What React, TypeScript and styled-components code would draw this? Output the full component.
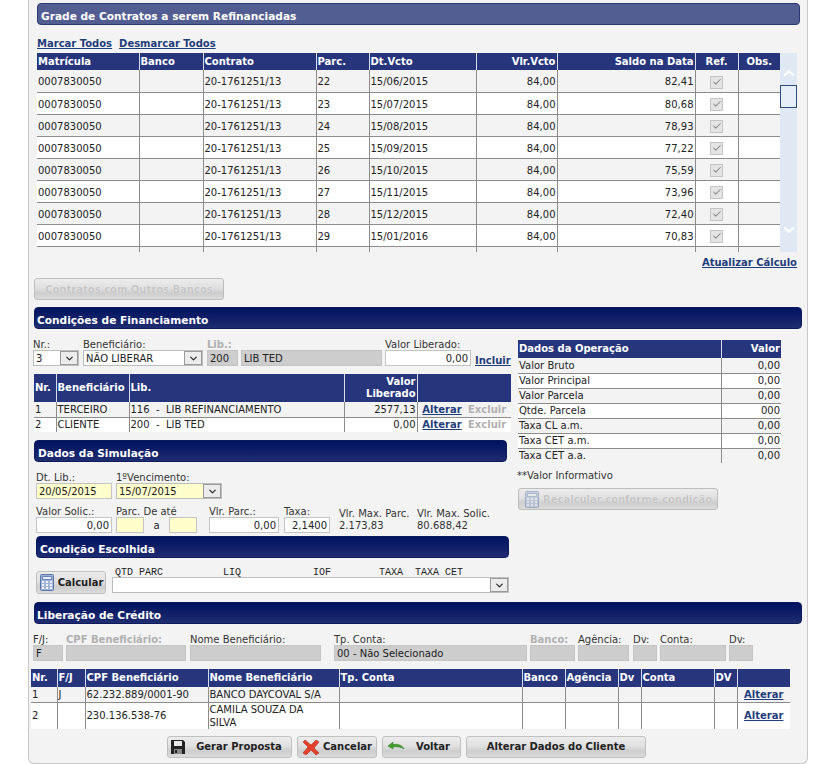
import React from 'react'
import styled, { createGlobalStyle } from 'styled-components'
import { Check, ChevronDown, ChevronUp } from 'lucide-react'

const GlobalStyle = createGlobalStyle`
  html, body {
    margin: 0;
    padding: 0;
    background: #fff;
    overflow: hidden;
  }
  body {
    font-family: "DejaVu Sans", Verdana, sans-serif;
    font-size: 10px;
    color: #222;
  }
  * { box-sizing: border-box; }
`

const Panel = styled.div`
  width: 780px;
  height: 764px;
  margin-left: 28px;
  padding: 3px 0 0 2px;
  background: #f3f3f3;
  border: 1px solid #c8c8c8;
  border-top: 0;
  border-radius: 0 0 6px 6px;
`

const TitleBar = styled.h2<{ $width: number; $left: number; $light?: boolean; $top?: number; $inset?: number }>`
  display: flex;
  align-items: center;
  width: ${p => p.$width}px;
  height: 22px;
  margin: ${p => p.$top ?? 0}px 0 0 ${p => p.$left}px;
  padding: 3px 0 0 ${p => p.$inset ?? 3}px;
  border: 1px solid ${p => (p.$light ? '#2c3974' : '#0d1a5c')};
  border-radius: 4px;
  background: ${p => (p.$light ? '#525d92' : 'linear-gradient(#001360, #1f2c70)')};
  color: #fff;
  font-size: 10.6px;
  font-weight: bold;
`

const LinkRow = styled.div`
  display: flex;
  gap: 7px;
  height: 13px;
  margin: 12px 0 0 6px;
  line-height: 13px;
`

const TextLink = styled.a<{ $muted?: boolean }>`
  color: ${p => (p.$muted ? '#b0b0b0' : '#1f3d7a')};
  font-weight: bold;
  text-decoration: ${p => (p.$muted ? 'none' : 'underline')};
  white-space: nowrap;
`

const GridArea = styled.div`
  display: flex;
  width: 760px;
  height: 199px;
  margin: 3px 0 0 6px;
`

const GridClip = styled.div`
  width: 743px;
  height: 199px;
  overflow: hidden;
`

const Table = styled.table<{ $width: number; $top?: number; $left?: number }>`
  width: ${p => p.$width}px;
  margin: ${p => p.$top ?? 0}px 0 0 ${p => p.$left ?? 0}px;
  table-layout: fixed;
  border-collapse: collapse;
  tbody tr:last-child td { border-bottom: 0; }
`

const HeadRow = styled.tr<{ $height: number }>`
  height: ${p => p.$height}px;
`

const Head = styled.th<{ $right?: boolean; $center?: boolean }>`
  padding: 0 1px;
  background: #27367c;
  border-left: 1px solid #d8dbe8;
  color: #fff;
  font-size: 10px;
  font-weight: bold;
  text-align: ${p => (p.$right ? 'right' : p.$center ? 'center' : 'left')};
  line-height: 12px;
  &:first-child { border-left: 0; }
`

const Row = styled.tr<{ $height: number; $alt?: boolean }>`
  height: ${p => p.$height}px;
  background: ${p => (p.$alt ? '#fff' : '#f3f3f3')};
`

const GridRow = styled(Row)`
  td { padding-top: 2px; }
`

const Cell = styled.td<{ $right?: boolean; $center?: boolean }>`
  padding: 0 1px;
  border-left: 1px solid #8c8c8c;
  border-bottom: 1px solid #8c8c8c;
  text-align: ${p => (p.$right ? 'right' : p.$center ? 'center' : 'left')};
  line-height: 13px;
  overflow: hidden;
  white-space: nowrap;
  &:first-child { border-left: 0; }
`

const FadedCheck = styled.span`
  display: inline-flex;
  align-items: center;
  justify-content: center;
  width: 13px;
  height: 13px;
  vertical-align: middle;
  background: #e4e4e4;
  border: 1px solid #c4c4c4;
  color: #8a8a8a;
`

const ScrollTrack = styled.div`
  position: relative;
  display: flex;
  flex-direction: column;
  justify-content: space-between;
  align-items: center;
  width: 17px;
  height: 199px;
  padding: 12px 0 14px;
  background: #dfe8f3;
  color: #fff;
`

const ScrollThumb = styled.div`
  position: absolute;
  top: 32px;
  left: 0;
  width: 17px;
  height: 23px;
  background: #e6eef8;
  border: 1px solid #2f4a7c;
`

const RefreshRow = styled.div`
  display: flex;
  justify-content: flex-end;
  width: 766px;
  height: 13px;
  margin-top: 4px;
  line-height: 13px;
`

const Button = styled.button<{ $width: number; $disabled?: boolean; $height?: number; $padRight?: number }>`
  display: flex;
  align-items: center;
  justify-content: center;
  gap: 3px;
  flex: 0 0 auto;
  width: ${p => p.$width}px;
  height: ${p => p.$height ?? 22}px;
  padding: 0 ${p => p.$padRight ?? 0}px 0 0;
  background: linear-gradient(#ececec, #e0e0e0 45%, #cdcdcd 70%, #dcdcdc);
  border: 1px solid ${p => (p.$disabled ? '#bdbdbd' : '#c0c0c0')};
  border-radius: 3px;
  color: ${p => (p.$disabled ? '#c4c4c4' : '#222')};
  font-family: inherit;
  font-size: 10px;
  font-weight: bold;
  text-shadow: ${p => (p.$disabled ? '0 0 1px #fff' : 'none')};
  white-space: nowrap;
`

const LooseButton = styled(Button)`
  margin: 9px 0 0 3px;
`

const RecalcButton = styled(Button)`
  margin-top: 6px;
`

const ButtonLabel = styled.span<{ $left: number }>`
  margin-left: ${p => p.$left}px;
`

const SplitArea = styled.div`
  display: flex;
`

const LeftColumn = styled.div`
  width: 487px;
`

const RightColumn = styled.div`
  width: 264px;
  padding-top: 11px;
`

const Fields = styled.div<{ $left?: number; $top?: number; $gap?: number }>`
  display: flex;
  align-items: flex-end;
  gap: ${p => p.$gap ?? 4}px;
  margin: ${p => p.$top ?? 0}px 0 0 ${p => p.$left ?? 0}px;
`

const Field = styled.label<{ $width: number; $shift?: number }>`
  display: flex;
  flex-direction: column;
  flex: 0 0 auto;
  width: ${p => p.$width}px;
  margin-left: ${p => p.$shift ?? 0}px;
`

const Caption = styled.span<{ $off?: boolean }>`
  height: 11px;
  line-height: 11px;
  font-weight: ${p => (p.$off ? 'bold' : 'normal')};
  color: ${p => (p.$off ? '#b0b0b0' : '#333')};
  white-space: nowrap;
`

const Input = styled.input<{ $tone?: 'white' | 'grey' | 'yellow'; $right?: boolean; $width?: number }>`
  width: ${p => (p.$width ? `${p.$width}px` : '100%')};
  height: 16px;
  padding: 0 2px;
  background: ${p => (p.$tone === 'grey' ? '#cdcdcd' : p.$tone === 'yellow' ? '#ffffcc' : '#fff')};
  border: 1px solid #c4c4c4;
  border-radius: 0;
  color: #222;
  font-family: inherit;
  font-size: 10px;
  text-align: ${p => (p.$right ? 'right' : 'left')};
  flex: 0 0 auto;
  outline: none;
`

const SelectBox = styled.div<{ $tone?: 'white' | 'yellow'; $width?: number }>`
  display: flex;
  align-items: center;
  justify-content: space-between;
  width: ${p => (p.$width ? `${p.$width}px` : '100%')};
  height: 16px;
  padding-left: 2px;
  background: ${p => (p.$tone === 'yellow' ? '#ffffcc' : '#fff')};
  border: 1px solid #bdbdbd;
  flex: 0 0 auto;
`

const SelectArrow = styled.span`
  display: flex;
  align-items: center;
  justify-content: center;
  width: 18px;
  height: 14px;
  background: #ececec;
  border: 1px solid #9a9a9a;
  color: #222;
`

const Sep = styled.span`
  flex: 0 0 17px;
  text-align: center;
  height: 15px;
  line-height: 15px;
`

const Informative = styled.p`
  margin: 7px 0 0 -1px;
  line-height: 12px;
  color: #333;
`

const Plain = styled.div<{ $shift: number }>`
  width: 78px;
  margin: 0 0 1px ${p => p.$shift}px;
  line-height: 12px;
  color: #333;
  white-space: nowrap;
  flex: 0 0 auto;
`

const ChooseRow = styled.div`
  display: flex;
  gap: 6px;
  margin: 13px 0 0 5px;
`

const ChooseBody = styled.div`
  width: 397px;
`

const MonoHead = styled.div`
  height: 9px;
  margin: -3px 0 0 3px;
  font-family: "Liberation Mono", monospace;
  font-size: 10px;
  line-height: 10px;
  white-space: pre;
`

const Footer = styled.div`
  display: flex;
  gap: 5px;
  margin: 7px 0 0 136px;
`

const GreyInput = styled(Input).attrs({ readOnly: true })``

const FadedCalcIcon = styled.span`
  display: flex;
  opacity: 0.45;
`

const Selector = ({ value, tone, width }: { value: string; tone?: 'white' | 'yellow'; width?: number }) => (
  <SelectBox $tone={tone} $width={width}>
    <span>{value}</span>
    <SelectArrow><ChevronDown size={11} strokeWidth={2.5} /></SelectArrow>
  </SelectBox>
)

const CalcIcon = () => (
  <svg width="16" height="17" viewBox="0 0 16 17">
    <rect x="1.5" y="0.5" width="13" height="16" rx="1" fill="#9fb4d6" stroke="#5a76a8" />
    <rect x="3.5" y="2.5" width="9" height="3" fill="#e4edf8" stroke="#6d88b5" />
    <path d="M3 7h2v2H3zM7 7h2v2H7zM11 7h2v2h-2zM3 10h2v2H3zM7 10h2v2H7zM11 10h2v2h-2zM3 13h2v2H3zM7 13h2v2H7zM11 13h2v2h-2z" fill="#f0f4fa" />
  </svg>
)

const SaveIcon = () => (
  <svg width="16" height="16" viewBox="0 0 16 16">
    <path d="M1 1h12l2 2v12H1z" fill="#222" />
    <rect x="4" y="2" width="8" height="5" fill="#e8e8e8" />
    <rect x="4" y="10" width="8" height="5" fill="#8a8a8a" />
    <rect x="5" y="11" width="2" height="3" fill="#222" />
  </svg>
)

const CancelIcon = () => (
  <svg width="18" height="18" viewBox="0 0 18 18">
    <path d="M3 2 9 7l5-5 3 2-5 6 5 5-3 2-5-5-5 5-3-2 5-6L1 4z" fill="#e2402c" stroke="#b0301f" strokeWidth="0.6" />
  </svg>
)

const BackIcon = () => (
  <svg width="18" height="14" viewBox="0 0 18 14">
    <path d="M1 6 6 2v2.5c5-.8 9 .5 11 4.5-3-2-6-2.6-11-2V9z" fill="#3f9e2c" stroke="#2c7a1e" strokeWidth="0.5" />
  </svg>
)

const contracts = [
  ['22', '15/06/2015', '82,41'],
  ['23', '15/07/2015', '80,68'],
  ['24', '15/08/2015', '78,93'],
  ['25', '15/09/2015', '77,22'],
  ['26', '15/10/2015', '75,59'],
  ['27', '15/11/2015', '73,96'],
  ['28', '15/12/2015', '72,40'],
  ['29', '15/01/2016', '70,83'],
]

const operation = [
  ['Valor Bruto', '0,00'],
  ['Valor Principal', '0,00'],
  ['Valor Parcela', '0,00'],
  ['Qtde. Parcela', '000'],
  ['Taxa CL a.m.', '0,00'],
  ['Taxa CET a.m.', '0,00'],
  ['Taxa CET a.a.', '0,00'],
]

const Columns = ({ widths }: { widths: number[] }) => (
  <colgroup>
    {widths.map((w, i) => <col key={i} width={w} />)}
  </colgroup>
)

const RowCheck = () => (
  <FadedCheck><Check size={10} strokeWidth={2.5} /></FadedCheck>
)

const ContractGrid = () => (
  <GridArea>
    <GridClip>
      <Table $width={743}>
        <Columns widths={[102, 64, 113, 53, 107, 81, 138, 43, 42]} />
        <thead>
          <HeadRow $height={17}>
            <Head>Matrícula</Head>
            <Head>Banco</Head>
            <Head>Contrato</Head>
            <Head>Parc.</Head>
            <Head>Dt.Vcto</Head>
            <Head $right>Vlr.Vcto</Head>
            <Head $right>Saldo na Data</Head>
            <Head $center>Ref.</Head>
            <Head $center>Obs.</Head>
          </HeadRow>
        </thead>
        <tbody>
          {contracts.map((c, i) => (
            <GridRow key={c[0]} $height={22} $alt={i % 2 === 1}>
              <Cell>0007830050</Cell>
              <Cell />
              <Cell>20-1761251/13</Cell>
              <Cell>{c[0]}</Cell>
              <Cell>{c[1]}</Cell>
              <Cell $right>84,00</Cell>
              <Cell $right>{c[2]}</Cell>
              <Cell $center><RowCheck /></Cell>
              <Cell />
            </GridRow>
          ))}
          {/* next row only peeks in under the clip, its text is below the fold */}
          <GridRow $height={22}>
            <Cell /><Cell /><Cell /><Cell /><Cell /><Cell /><Cell />
            <Cell $center><RowCheck /></Cell>
            <Cell />
          </GridRow>
        </tbody>
      </Table>
    </GridClip>
    <ScrollTrack>
      <ChevronUp size={16} strokeWidth={3} />
      <ScrollThumb />
      <ChevronDown size={16} strokeWidth={3} />
    </ScrollTrack>
  </GridArea>
)

const Financing = () => (
  <>
    <Fields $left={2} $top={10}>
      <Field $width={46}>
        <Caption>Nr.:</Caption>
        <Selector value="3" />
      </Field>
      <Field $width={120}>
        <Caption>Beneficiário:</Caption>
        <Selector value="NÃO LIBERAR" />
      </Field>
      <Field $width={31}>
        <Caption $off>Lib.:</Caption>
        <GreyInput $tone="grey" defaultValue="200" />
      </Field>
      <Field $width={141} $shift={-1}>
        <Caption> </Caption>
        <GreyInput $tone="grey" defaultValue="LIB TED" />
      </Field>
      <Field $width={86} $shift={-1}>
        <Caption>Valor Liberado:</Caption>
        <Input readOnly $right defaultValue="0,00" />
      </Field>
      <TextLink>Incluir</TextLink>
    </Fields>
    <Table $width={477} $top={8} $left={3}>
      <Columns widths={[22, 73, 215, 73, 94]} />
      <thead>
        <HeadRow $height={28}>
          <Head>Nr.</Head>
          <Head>Beneficiário</Head>
          <Head>Lib.</Head>
          <Head $right>Valor Liberado</Head>
          <Head />
        </HeadRow>
      </thead>
      <tbody>
        <Row $height={15}>
          <Cell>1</Cell>
          <Cell>TERCEIRO</Cell>
          <Cell>116 &nbsp;- &nbsp;LIB REFINANCIAMENTO</Cell>
          <Cell $right>2577,13</Cell>
          <Cell $center><TextLink>Alterar</TextLink>&nbsp;&nbsp;<TextLink $muted>Excluir</TextLink></Cell>
        </Row>
        <Row $height={15} $alt>
          <Cell>2</Cell>
          <Cell>CLIENTE</Cell>
          <Cell>200 &nbsp;- &nbsp;LIB TED</Cell>
          <Cell $right>0,00</Cell>
          <Cell $center><TextLink>Alterar</TextLink>&nbsp;&nbsp;<TextLink $muted>Excluir</TextLink></Cell>
        </Row>
      </tbody>
    </Table>
  </>
)

const Simulation = () => (
  <>
    <TitleBar $width={473} $left={3} $top={8}>Dados da Simulação</TitleBar>
    <Fields $left={5} $top={10}>
      <Field $width={76}>
        <Caption>Dt. Lib.:</Caption>
        <Input readOnly $tone="yellow" defaultValue="20/05/2015" />
      </Field>
      <Field $width={106}>
        <Caption>1ºVencimento:</Caption>
        <Selector value="15/07/2015" tone="yellow" />
      </Field>
    </Fields>
    <Fields $left={5} $top={7}>
      <Field $width={76}>
        <Caption>Valor Solic.:</Caption>
        <Input readOnly $right defaultValue="0,00" />
      </Field>
      <Field $width={81}>
        <Caption>Parc. De até</Caption>
        <Fields>
          <Input readOnly $tone="yellow" $width={28} />
          <Sep>a</Sep>
          <Input readOnly $tone="yellow" $width={28} />
        </Fields>
      </Field>
      <Field $width={70} $shift={8}>
        <Caption>Vlr. Parc.:</Caption>
        <Input readOnly $right defaultValue="0,00" />
      </Field>
      <Field $width={46} $shift={1}>
        <Caption>Taxa:</Caption>
        <Input readOnly $right defaultValue="2,1400" />
      </Field>
      <Plain $shift={5}>Vlr. Max. Parc.<br />2.173,83</Plain>
      <Plain $shift={-4}>Vlr. Max. Solic.<br />80.688,42</Plain>
    </Fields>
    <TitleBar $width={473} $left={5} $top={3}>Condição Escolhida</TitleBar>
    <ChooseRow>
      <Button type="button" $width={70} $height={23}><CalcIcon />Calcular</Button>
      <ChooseBody>
        <MonoHead>{'QTD PARC          LIQ            IOF        TAXA  TAXA CET'}</MonoHead>
        <Selector value="" width={397} />
      </ChooseBody>
    </ChooseRow>
  </>
)

const OperationData = () => (
  <>
    <Table $width={263}>
      <Columns widths={[203, 60]} />
      <thead>
        <HeadRow $height={18}>
          <Head>Dados da Operação</Head>
          <Head $right>Valor</Head>
        </HeadRow>
      </thead>
      <tbody>
        {operation.map((o, i) => (
          <Row key={o[0]} $height={15} $alt={i % 2 === 1}>
            <Cell>{o[0]}</Cell>
            <Cell $right>{o[1]}</Cell>
          </Row>
        ))}
      </tbody>
    </Table>
    <Informative>**Valor Informativo</Informative>
    <RecalcButton type="button" disabled $disabled $width={200}>
      <FadedCalcIcon><CalcIcon /></FadedCalcIcon>
      Recalcular conforme condição
    </RecalcButton>
  </>
)

const Release = () => (
  <>
    <TitleBar $width={768} $left={3} $top={8} $inset={2}>Liberação de Crédito</TitleBar>
    <Fields $left={2} $top={10} $gap={3}>
      <Field $width={30}>
        <Caption>F/J:</Caption>
        <GreyInput $tone="grey" defaultValue="F" />
      </Field>
      <Field $width={120}>
        <Caption $off>CPF Beneficiário:</Caption>
        <GreyInput $tone="grey" />
      </Field>
      <Field $width={131} $shift={1}>
        <Caption>Nome Beneficiário:</Caption>
        <GreyInput $tone="grey" />
      </Field>
      <Field $width={193} $shift={10}>
        <Caption>Tp. Conta:</Caption>
        <GreyInput $tone="grey" defaultValue="00 - Não Selecionado" />
      </Field>
      <Field $width={45}>
        <Caption $off>Banco:</Caption>
        <GreyInput $tone="grey" />
      </Field>
      <Field $width={51}>
        <Caption>Agência:</Caption>
        <GreyInput $tone="grey" />
      </Field>
      <Field $width={24} $shift={1}>
        <Caption>Dv:</Caption>
        <GreyInput $tone="grey" />
      </Field>
      <Field $width={66}>
        <Caption>Conta:</Caption>
        <GreyInput $tone="grey" />
      </Field>
      <Field $width={24}>
        <Caption>Dv:</Caption>
        <GreyInput $tone="grey" />
      </Field>
    </Fields>
    <Table $width={759} $top={8}>
      <Columns widths={[26, 28, 123, 131, 183, 43, 53, 23, 73, 23, 53]} />
      <thead>
        <HeadRow $height={18}>
          <Head>Nr.</Head>
          <Head>F/J</Head>
          <Head>CPF Beneficiário</Head>
          <Head>Nome Beneficiário</Head>
          <Head>Tp. Conta</Head>
          <Head>Banco</Head>
          <Head>Agência</Head>
          <Head>Dv</Head>
          <Head>Conta</Head>
          <Head>DV</Head>
          <Head />
        </HeadRow>
      </thead>
      <tbody>
        <Row $height={15}>
          <Cell>1</Cell>
          <Cell>J</Cell>
          <Cell>62.232.889/0001-90</Cell>
          <Cell>BANCO DAYCOVAL S/A</Cell>
          <Cell /><Cell /><Cell /><Cell /><Cell /><Cell />
          <Cell $center><TextLink>Alterar</TextLink></Cell>
        </Row>
        <Row $height={26} $alt>
          <Cell>2</Cell>
          <Cell />
          <Cell>230.136.538-76</Cell>
          <Cell>CAMILA SOUZA DA<br />SILVA</Cell>
          <Cell /><Cell /><Cell /><Cell /><Cell /><Cell />
          <Cell $center><TextLink>Alterar</TextLink></Cell>
        </Row>
      </tbody>
    </Table>
  </>
)

const App = () => (
  <Panel>
    <GlobalStyle />
    <TitleBar $light $width={763} $left={6}>Grade de Contratos a serem Refinanciadas</TitleBar>
    <LinkRow>
      <TextLink>Marcar Todos</TextLink>
      <TextLink>Desmarcar Todos</TextLink>
    </LinkRow>
    <ContractGrid />
    <RefreshRow><TextLink>Atualizar Cálculo</TextLink></RefreshRow>
    <LooseButton type="button" disabled $disabled $width={190}>Contratos com Outros Bancos</LooseButton>
    <TitleBar $width={768} $left={3} $top={7} $inset={2}>Condições de Financiamento</TitleBar>
    <SplitArea>
      <LeftColumn>
        <Financing />
        <Simulation />
      </LeftColumn>
      <RightColumn>
        <OperationData />
      </RightColumn>
    </SplitArea>
    <Release />
    <Footer>
      <Button type="button" $width={125} $padRight={7}><SaveIcon /><ButtonLabel $left={7}>Gerar Proposta</ButtonLabel></Button>
      <Button type="button" $width={80}><CancelIcon />Cancelar</Button>
      <Button type="button" $width={79} $padRight={6}><BackIcon /><ButtonLabel $left={8}>Voltar</ButtonLabel></Button>
      <Button type="button" $width={180}>Alterar Dados do Cliente</Button>
    </Footer>
  </Panel>
)

export default App
